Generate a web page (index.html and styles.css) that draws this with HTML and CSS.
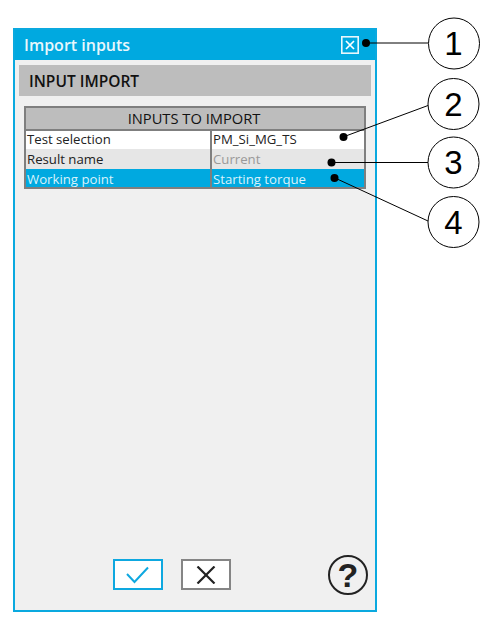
FILE: index.html
```html
<!DOCTYPE html>
<html lang="en">
<head>
<meta charset="utf-8">
<title>Import inputs</title>
<link rel="stylesheet" href="styles.css">
</head>
<body>
<div class="window">
  <header class="titlebar">
    <span class="title">Import inputs</span>
    <button class="close" aria-label="Close">
      <svg width="18" height="18" viewBox="0 0 18 18"><rect x="0.800" y="0.800" width="16.400" height="16.400" fill="none" stroke="#e8f7fc" stroke-width="1.600"/><path d="M5 5 13 13M13 5 5 13" stroke="#fff" stroke-width="1.700" fill="none"/></svg>
    </button>
  </header>
  <main class="content">
    <h1 class="section">INPUT IMPORT</h1>
    <div class="table">
      <div class="table-head">INPUTS TO IMPORT</div>
      <div class="row row-white"><div class="cell cell-label">Test selection</div><div class="cell">PM_Si_MG_TS</div></div>
      <div class="row row-grey"><div class="cell cell-label">Result name</div><div class="cell cell-muted">Current</div></div>
      <div class="row row-blue"><div class="cell cell-label">Working point</div><div class="cell">Starting torque</div></div>
    </div>
    <footer class="actions">
      <button class="btn btn-ok" aria-label="OK">
        <svg width="24" height="18" viewBox="0 0 24 18"><path d="M1 8 8.500 16 22 1.500" fill="none" stroke="#0ea8e0" stroke-width="2"/></svg>
      </button>
      <button class="btn btn-cancel" aria-label="Cancel">
        <svg width="20" height="18" viewBox="0 0 20 18"><path d="M1.500 0.500 18.500 17.500M18.500 0.500 1.500 17.500" fill="none" stroke="#222" stroke-width="2.200"/></svg>
      </button>
      <span class="help" aria-label="Help">?</span>
    </footer>
  </main>
</div>
<svg class="callouts" width="494" height="638" viewBox="0 0 494 638">
  <g fill="none" stroke="#000" stroke-width="1">
    <path d="M366 43H428M343 137 428 105.500M332 162.500H428M335 178 428 221"/>
    <circle cx="454" cy="43.500" r="25.500" fill="#fff"/>
    <circle cx="453.500" cy="104" r="25.500" fill="#fff"/>
    <circle cx="453.500" cy="162.500" r="25.500" fill="#fff"/>
    <circle cx="453.500" cy="222" r="25.500" fill="#fff"/>
  </g>
  <g fill="#000">
    <circle cx="366" cy="43" r="4"/>
    <circle cx="343.500" cy="137" r="4"/>
    <circle cx="331.500" cy="162.500" r="4"/>
    <circle cx="334.500" cy="178" r="4"/>
  </g>
  <g class="callout-num">
    <text x="453.500" y="54.500">1</text>
    <text x="453.500" y="115.500">2</text>
    <text x="453.500" y="174">3</text>
    <text x="453.500" y="233.500">4</text>
  </g>
</svg>
</body>
</html>
```
FILE: styles.css
```css
* { box-sizing: border-box; }
html, body { margin: 0; padding: 0; background: #fff; }
body {
  width: 494px;
  height: 638px;
  padding: 28px 117px 26px 13px;
  font-family: "Open Sans", sans-serif;
  overflow: hidden;
}
.window {
  width: 364px;
  height: 584px;
  display: flex;
  flex-direction: column;
  border: 2px solid #0aa9df;
  background: #f0f0f0;
}
.titlebar {
  height: 30px;
  flex: none;
  display: flex;
  align-items: center;
  justify-content: space-between;
  background: #00a9e0;
  padding: 0 16px 0 9px;
}
.title { color: #e8f7fc; font-size: 16px; font-weight: 600; }
.close { border: 0; padding: 0; background: none; display: flex; }
.content {
  flex: 1;
  display: flex;
  flex-direction: column;
  padding: 5px 4px 0;
}
.section {
  margin: 0;
  height: 31px;
  background: #bdbdbd;
  color: #111;
  font-size: 15.500px;
  font-weight: 600;
  line-height: 33px;
  padding-left: 10px;
}
.table {
  margin: 10px 5px 0;
  border: 2px solid #7f7f7f;
  font-size: 13.200px;
}
.table-head {
  height: 23px;
  background: #bdbdbd;
  border-bottom: 2px solid #7f7f7f;
  text-align: center;
  font-size: 14.700px;
  line-height: 20px;
  padding-right: 2px;
  color: #111;
}
.row { display: grid; grid-template-columns: 185px 1fr; }
.row-white { background: #fff; color: #222; height: 18px; line-height: 16px; }
.row-grey { background: #e6e6e6; color: #222; height: 20px; line-height: 20px; }
.row-blue { background: #00a9e0; color: #d9f2fb; height: 18px; line-height: 20px; }
.cell { padding-left: 2px; white-space: nowrap; }
.cell-label { padding-left: 1px; border-right: 2px solid #7f7f7f; width: 186px; }
.cell-muted { color: #999; }
.actions {
  margin-top: auto;
  height: 64px;
  display: flex;
  align-items: flex-start;
  gap: 18px;
  padding: 13px 0 0 94px;
}
.btn {
  width: 50px;
  height: 31px;
  padding: 0;
  background: #fff;
  display: flex;
  align-items: center;
  justify-content: center;
}
.btn-ok { border: 2px solid #0ea8e0; }
.btn-cancel { border: 2px solid #858585; }
.help {
  width: 40px;
  height: 40px;
  margin: -4px 3px 0 auto;
  border: 2px solid #222;
  border-radius: 50%;
  color: #222;
  font-family: "Liberation Sans", sans-serif;
  font-weight: 700;
  font-size: 34px;
  line-height: 36px;
  text-align: center;
}
.callouts { position: absolute; left: 0; top: 0; pointer-events: none; }
.callout-num text {
  font-family: "Liberation Sans", sans-serif;
  font-size: 33px;
  text-anchor: middle;
  fill: #000;
}
```
